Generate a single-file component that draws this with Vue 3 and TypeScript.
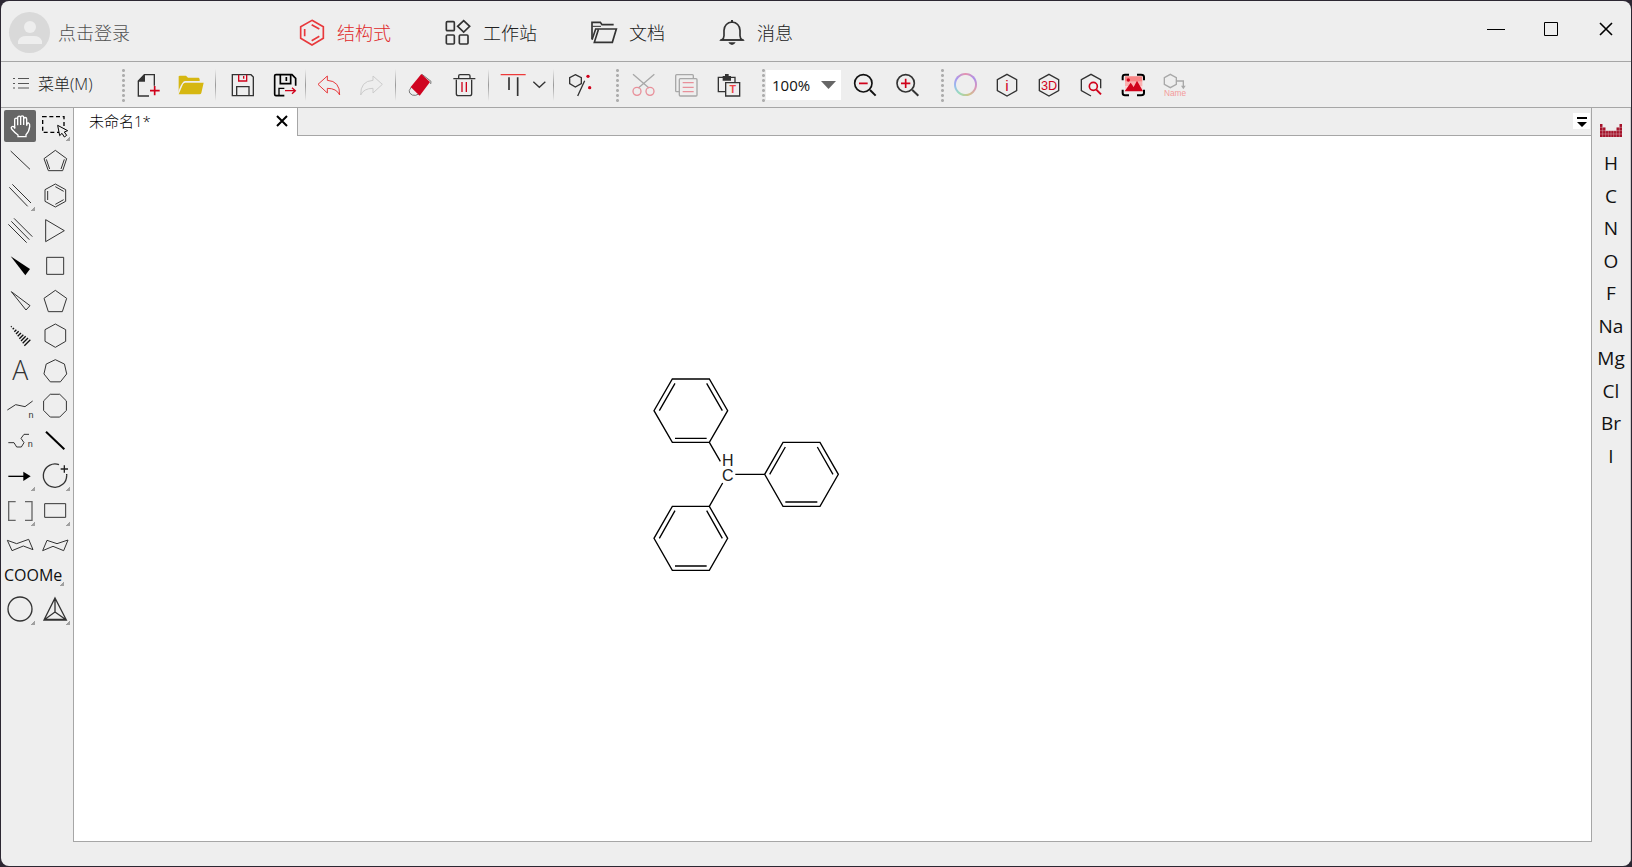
<script setup lang="ts">
import { h, ref } from 'vue'

interface Shape {
  d?: string
  text?: string
  x?: number
  y?: number
  size?: number
  weight?: number
  family?: string
  stroke?: string
  fill?: string
  w?: number
  dash?: string
}
interface Tool {
  label: string
  shapes: Shape[]
  more?: boolean
}

const INK = '#333333'
const RED = '#d0021b'
const PINK = '#e8909a'
const GREY = '#a8a8a8'

const line = (d: string, stroke = INK, w = 4): Shape => ({ d, stroke, w })
const solid = (d: string, fill = INK): Shape => ({ d, fill })
const ring = (cx: number, cy: number, r: number) =>
  `M${cx - r} ${cy}a${r} ${r} 0 1 0 ${2 * r} 0a${r} ${r} 0 1 0 ${-2 * r} 0z`
const polygon = (n: number, cx: number, cy: number, r: number, turn = 0) =>
  'M' +
  Array.from({ length: n }, (_, i) => {
    const a = ((i * 360) / n + turn - 90) * (Math.PI / 180)
    return `${(cx + r * Math.cos(a)).toFixed(1)} ${(cy + r * Math.sin(a)).toFixed(1)}`
  }).join('L') +
  'z'
const hashBars = Array.from({ length: 9 }, (_, i) => {
  const x = 22 + i * 6
  const y = 20 + i * 6
  const s = 1 + i
  return `M${x - s} ${y + s}L${x + s} ${y - s}`
}).join('')

const Glyph = (props: { shapes: Shape[]; box?: string }) =>
  h(
    'svg',
    { viewBox: props.box ?? '0 0 72 72', 'aria-hidden': 'true' },
    props.shapes.map((s) =>
      s.text
        ? h(
            'text',
            {
              x: s.x,
              y: s.y,
              fill: s.fill ?? INK,
              'font-size': s.size,
              'font-weight': s.weight ?? 400,
              'font-family': s.family ?? 'Liberation Sans, sans-serif',
              'text-anchor': 'middle',
            },
            s.text,
          )
        : h('path', {
            d: s.d,
            fill: s.fill ?? 'none',
            stroke: s.stroke ?? 'none',
            'stroke-width': s.w,
            'stroke-dasharray': s.dash,
          }),
    ),
  )
Glyph.props = ['shapes', 'box']

const sections = [
  {
    name: '结构式',
    shapes: [
      line('M39 4L73 23V58L39 78L5 58V23z', '#e8393c', 5),
      line('M17 30V52M38 17L61 30M38 65L61 52', '#e8393c', 5),
    ],
  },
  {
    name: '工作站',
    shapes: [
      line('M4 11Q4 8 7 8H25Q28 8 28 11V32Q28 35 25 35H7Q4 35 4 32z', INK, 5),
      line('M56 5L74 22L56 39L38 22z', INK, 5),
      line('M4 51Q4 48 7 48H25Q28 48 28 51V72Q28 75 25 75H7Q4 75 4 72z', INK, 5),
      line('M43 51Q43 48 46 48H66Q69 48 69 51V72Q69 75 66 75H46Q43 75 43 72z', INK, 5),
    ],
  },
  {
    name: '文档',
    shapes: [
      line('M3 60V10H28L33 17H68', INK, 5),
      line('M3 62L14 30H76L64 70H10L22 32', INK, 5),
      line('M4 22H30', INK, 3),
    ],
  },
  {
    name: '消息',
    shapes: [
      line('M8 63Q15 58 15 50V34Q17 11 39 9Q61 11 63 34V50Q63 58 70 63z', INK, 5),
      line('M4 63H74', INK, 5),
      line('M39 3V10', INK, 6),
      solid('M28 70H50Q46 78 39 78Q32 78 28 70z'),
    ],
  },
]

const hexagon = 'M36 4L65 20V53L36 69L7 53V20z'
const t = (label: string, ...shapes: Shape[]): Tool => ({ label, shapes })

const fileTools = [
  t('新建', line('M55 38V5H25L7 24V69H39'), solid('M5 26L27 3V26z'), line('M56 39V67M42 53H71', RED, 5)),
  t(
    '打开',
    solid('M-1 60V10Q-1 8 3 8H21L27 14H59Q62 15 62 20V24H18Q10 24 0 50z', '#d6b711'),
    solid('M-1 64L12 34Q14 29 19 29H74L67 60Q66 64 61 64z', '#d6b711'),
  ),
]
const saveTools = [
  t('保存', line('M7 5H63L70 12V68H7z'), line('M26 5V24H50V5M41 9V17', RED), line('M20 68V41H57V68')),
  t(
    '另存为',
    line('M34 68H9Q5 68 5 64V8Q5 5 9 5H57L68 16V38', '#000', 5),
    line('M22 5V32H53V5M40 12V24', '#000', 5),
    line('M18 68V46H34', '#000', 4),
    line('M36 53H66M57 44L67 53L57 62', RED, 4),
  ),
]
const historyTools = [
  t('撤销', line('M6 34L34 9V22Q72 24 71 66Q62 46 34 46V60z', '#e8393c', 3)),
  t('重做', line('M70 34L42 9V22Q4 24 5 66Q14 46 42 46V60z', '#cccccc', 3)),
]
const eraseTools = [
  t(
    '橡皮擦',
    line('M42 4L69 25L68 33M10 42Q0 54 5 60Q12 69 23 67L34 62', '#777777', 3),
    solid('M40 3L66 27L35 68L8 42z', '#cf0420'),
  ),
  t(
    '删除',
    line('M4 17H70M20 17V9Q20 5 24 5H50Q54 5 54 9V17M13 20V62Q13 68 19 68H53Q59 68 59 62V20'),
    line('M30 27V57M43 27V57', RED),
  ),
]
const chemTools = [
  t(
    '结构整理',
    line('M22 5L40 14V32L22 42L5 32V14zM50 23L29 69', INK, 4),
    solid(ring(60, 10, 5), RED),
    solid(ring(65, 44, 5), RED),
  ),
]
const clipTools = [
  t('剪切', line('M6 4L54 45M70 4L22 45', GREY, 4), line(ring(18, 55, 12) + ring(57, 55, 12), PINK)),
  t(
    '复制',
    line('M16 56H8Q5 56 5 53V8Q5 5 8 5H55Q58 5 58 8V16M19 17H66Q69 17 69 20V66Q69 69 66 69H19Q16 69 16 66V20Q16 17 19 17z', GREY),
    line('M26 29H59M26 43H59M26 56H59', PINK),
  ),
  t(
    '粘贴',
    line('M26 56H4V13H54V29M26 29H68V69H26z'),
    solid('M17 9H24V3H35V9H42V23H17z'),
    { text: 'T', x: 47, y: 61, size: 32, weight: 700, fill: '#ee4444' },
  ),
]
const zoomTools = [
  t('缩小', line(ring(31, 31, 26), '#111', 5), line('M51 51L68 68', '#111', 6), line('M18 31H44', RED, 5)),
  t('放大', line(ring(29, 31, 26), INK, 5), line('M49 51L67 68', INK, 6), line('M15 31H43M29 17V45', RED, 5)),
]
const infoTools = [
  t('信息', line(hexagon), { text: 'i', x: 36, y: 53, size: 46, fill: RED }),
  t('3D', line(hexagon), { text: '3D', x: 36, y: 50, size: 38, fill: RED }),
  t(
    '搜索',
    line('M36 69L7 53V20L36 4L65 20V46'),
    line(ring(43, 40, 12), RED, 5),
    line('M52 50L66 64', RED, 6),
  ),
  t(
    '图像识别',
    solid('M12 10H64V26H12z', '#f98585'),
    solid('M12 26H64V40H12z', '#fbb0b0'),
    solid('M12 40H64V54H12z', '#fbd0d0'),
    solid('M11 55L29 29L38 42L48 23L66 55z', RED),
    solid(ring(22, 21, 5), RED),
    line('M5 22V12Q5 5 12 5H24M48 5H60Q69 5 69 12V22M69 50V60Q69 67 60 67H48M24 67H12Q5 67 5 60V50', '#000', 6),
  ),
  t(
    '名称',
    line('M22 4L40 14V34L22 44L4 34V14zM42 24H61V40', GREY),
    solid('M54 38H68L61 49z', GREY),
    { text: 'Name', x: 36, y: 68, size: 25, fill: '#f49a9a' },
  ),
]

const thin = (d: string): Shape => line(d, INK, 3)
const tools: Tool[] = [
  t('移动', line(
    'M32 56V29a4 4 0 0 1 9 0V46M41 46V23a4 4 0 0 1 9 0V45M50 45V22a4 4 0 0 1 9 0V45M59 45V27a4 4 0 0 1 9 0V47Q69 38 74 39Q78 41 77 49C76 62 72 68 66 74V80H42V75Q34 70 23 57a4 4 0 0 1 7 -6L34 55',
    '#fff', 4)),
  { ...t('选择',
    { d: 'M11 20H75V67H11z', stroke: '#000', w: 4, dash: '12 8' },
    { d: 'M56 46L62 77L69 70L76 81L83 76L76 66L86 62z', stroke: '#000', w: 3, fill: '#eeeeee' }), more: true },
  t('单键', thin('M20 18L78 73')),
  t('环戊二烯', thin('M49 16L83 41L71 77H28L15 41zM22 43L32 72M76 43L66 72')),
  { ...t('双键', thin('M25 13L81 69M16 22L71 79')), more: true },
  t('苯环', thin('M49 12L80 29V64L49 81L18 64V29zM26 33V60M49 20L74 34M49 73L74 59')),
  t('三键', thin('M30 10L85 65M22 19L76 74M13 28L68 83')),
  t('环丙烷', thin('M20 14L76 47L20 80z')),
  t('实楔形键', solid('M20 19L78 57L64 76z', '#000')),
  t('环丁烷', thin('M23 22H74V73H23z')),
  t('空楔形键', thin('M22 20L78 62L66 75z')),
  t('环戊烷', thin('M49 16L83 40L70 80H28L15 40z')),
  t('虚楔形键', line(hashBars, '#111', 4)),
  t('环己烷', thin('M49 12L80 29V64L49 82L18 64V29z')),
  t('文字', { text: 'A', x: 49, y: 76, size: 80, weight: 300, family: 'Open Sans, sans-serif' }),
  t('环庚烷', thin(polygon(7, 49, 49, 35))),
  t('长链', thin('M10 60L35 44L63 50L86 33'), { text: 'n', x: 81, y: 83, size: 27 }),
  t('环辛烷', thin(polygon(8, 48, 47, 37, 22.5))),
  t('弯链', thin('M13 53H30L38 66H52L60 53L51 40L60 28H75'), { text: 'n', x: 79, y: 66, size: 27 }),
  t('粗线', line('M21 20L76 73', '#000', 6)),
  { ...t('箭头', line('M13 49H62', '#000', 4), solid('M58 35L80 49L58 63z', '#000')), more: true },
  { ...t('电荷', line('M60 14A35 35 0 1 0 83 47', INK, 4), line('M83 47V42M65 27H87M76 16V38', '#222', 4)), more: true },
  { ...t('括号', line('M35 20H14V76H35M63 20H84V76H63', '#666666', 4)), more: true },
  { ...t('矩形', line('M17 26H80V67H17z', INK, 3)), more: true },
  t('船式', thin('M10 31L38 41L74 28L87 59L58 48L24 62z')),
  t('椅式', thin('M24 31L54 41L87 30L74 62L42 49L11 62z')),
]
const lastTools: Tool[] = [
  { ...t('圆', line(ring(48, 45, 36), INK, 4)), more: true },
  { ...t('四面体', line('M48 12L82 78H15zM48 12V54L15 78M48 54L82 78M15 76H82', INK, 4)), more: true },
]

const elements = ['H', 'C', 'N', 'O', 'F', 'Na', 'Mg', 'Cl', 'Br', 'I']
const table = 'M0 0h8v39h-8zM8 10h9v29h-9zM17 20h32v19h-32zM49 10h9v29h-9zM58 0h8v39h-8z'
const tableGrid = 'M0 10H66M0 20H66M0 30H66M8 0V39M17 0V39M25 0V39M33 0V39M41 0V39M49 0V39M58 0V39'

const zoom = ref('100%')
const activeTool = ref('移动')
</script>

<template>
  <div class="window">
    <header class="titlebar">
      <button class="account">
        <svg class="avatar" viewBox="0 0 41 41" aria-hidden="true">
          <circle cx="20.5" cy="20.5" r="20.5" fill="#d9d9d9" />
          <circle cx="21" cy="15" r="6" fill="#eeeeee" />
          <path d="M9 32V29Q11 24 17 24H25Q31 24 33 29V32z" fill="#eeeeee" />
        </svg>
        点击登录
      </button>
      <nav class="sections">
        <a v-for="(s, i) in sections" :key="s.name" href="#" :class="{ active: i === 0 }">
          <Glyph class="section-icon" :shapes="s.shapes" box="0 0 78 81" />{{ s.name }}
        </a>
      </nav>
      <div class="window-buttons">
        <button aria-label="最小化"><svg viewBox="0 0 18 18"><path d="M0 9.500H18" /></svg></button>
        <button aria-label="最大化"><svg viewBox="0 0 18 18"><path d="M2.500 2.500H15.500V15.500H2.500z" /></svg></button>
        <button aria-label="关闭"><svg viewBox="0 0 18 18"><path d="M3 3L15 15M15 3L3 15" stroke-width="1.600" /></svg></button>
      </div>
    </header>

    <div class="toolbar">
      <button class="menu">
        <svg viewBox="0 0 16 12" aria-hidden="true">
          <path d="M0 1.500H2M0 6.500H2M0 11H2M5 1.500H16M5 6.500H16M5 11H16" />
        </svg>
        菜单(M)
      </button>
      <i class="grip"></i>
      <div class="group file">
        <button v-for="b in fileTools" :key="b.label" :aria-label="b.label"><Glyph :shapes="b.shapes" /></button>
      </div>
      <i class="rule"></i>
      <div class="group near">
        <button v-for="b in saveTools" :key="b.label" :aria-label="b.label"><Glyph :shapes="b.shapes" /></button>
      </div>
      <i class="rule"></i>
      <div class="group history">
        <button v-for="b in historyTools" :key="b.label" :aria-label="b.label"><Glyph :shapes="b.shapes" /></button>
      </div>
      <i class="rule"></i>
      <div class="group erase">
        <button v-for="b in eraseTools" :key="b.label" :aria-label="b.label"><Glyph :shapes="b.shapes" /></button>
      </div>
      <i class="rule"></i>
      <div class="group align">
        <button aria-label="对齐">
          <Glyph :shapes="[line('M-1 5H74', '#ee3a3a', 4), line('M24 13V51M50 13V69', INK, 5)]" />
        </button>
        <button class="slim" aria-label="对齐方式">
          <Glyph :shapes="[line('M1 26L19 43L37 26')]" box="0 0 36 72" />
        </button>
      </div>
      <i class="rule"></i>
      <div class="group wide">
        <button v-for="b in chemTools" :key="b.label" :aria-label="b.label"><Glyph :shapes="b.shapes" /></button>
      </div>
      <i class="grip"></i>
      <div class="group clip">
        <button v-for="b in clipTools" :key="b.label" :aria-label="b.label"><Glyph :shapes="b.shapes" /></button>
      </div>
      <i class="grip"></i>
      <label class="zoom">
        <select v-model="zoom" aria-label="缩放">
          <option>50%</option>
          <option>100%</option>
          <option>200%</option>
        </select>
        <svg viewBox="0 0 15 8" aria-hidden="true"><path d="M0 0H15L7.500 8z" /></svg>
      </label>
      <div class="group clip">
        <button v-for="b in zoomTools" :key="b.label" :aria-label="b.label"><Glyph :shapes="b.shapes" /></button>
      </div>
      <i class="grip"></i>
      <div class="group info">
        <button aria-label="颜色"><span class="colour-ring"></span></button>
        <button v-for="b in infoTools" :key="b.label" :aria-label="b.label"><Glyph :shapes="b.shapes" /></button>
      </div>
    </div>

    <div class="body">
      <aside class="tools">
        <button
          v-for="b in tools"
          :key="b.label"
          :aria-label="b.label"
          :class="{ selected: b.label === activeTool, more: b.more }"
        >
          <Glyph :shapes="b.shapes" box="0 0 96 96" />
        </button>
        <button class="group-label more">COOMe</button>
        <button v-for="b in lastTools" :key="b.label" :aria-label="b.label" class="more">
          <Glyph :shapes="b.shapes" box="0 0 96 96" />
        </button>
      </aside>

      <main class="workspace">
        <div class="tabs">
          <div class="tab">
            <span>未命名1*</span>
            <button aria-label="关闭标签">
              <svg viewBox="0 0 12 12"><path d="M1 1L11 11M11 1L1 11" /></svg>
            </button>
          </div>
          <button class="tab-list" aria-label="标签列表">
            <svg viewBox="0 0 17 16"><path d="M4 4H14V6H4zM4 9H14L9 14z" /></svg>
          </button>
        </div>
        <div class="canvas">
          <svg class="molecule" viewBox="0 0 630 690" role="img" aria-label="三苯甲烷">
            <g id="bonds">
              <path d="M97 57H208L263 152L208 247H97L42 152zM105 70L58 152M200 70L247 152M105 235H200" />
              <path d="M429 247H540L595 343L540 439H429L374 343zM436 261L389 343M532 261L579 343M436 426H532" />
              <path d="M97 439H208L263 535L208 631H97L42 535zM105 452L58 535M200 452L247 535M105 618H200" />
              <path d="M208 247L241 304M286 343H374M248 369L208 439" />
            </g>
            <text x="263" y="319">H</text>
            <text x="263" y="362">C</text>
          </svg>
        </div>
      </main>

      <aside class="elements">
        <button class="periodic" aria-label="元素周期表">
          <svg viewBox="0 0 66 39">
            <path :d="table" fill="#a5122a" />
            <path :d="tableGrid" stroke="#eeeeee" />
          </svg>
        </button>
        <div class="symbols">
          <button v-for="e in elements" :key="e">{{ e }}</button>
        </div>
      </aside>
    </div>
  </div>
</template>

<style>
body {
  background: #2c2732;
}
</style>

<style scoped>
.window {
  box-sizing: border-box;
  display: flex;
  flex-direction: column;
  height: calc(100vh - 2px);
  margin: 1px;
  overflow: hidden;
  border-radius: 8px;
  background: #eeeeee;
  color: #333333;
  font-family: 'Open Sans', 'Noto Sans CJK SC', sans-serif;
  font-size: 16px;
}
svg {
  display: block;
  overflow: visible;
}
button {
  display: flex;
  align-items: center;
  justify-content: center;
  padding: 0;
  border: 0;
  background: none;
  color: inherit;
  font: inherit;
}

.titlebar {
  display: flex;
  align-items: center;
  flex: none;
  box-sizing: border-box;
  height: 61px;
  padding-top: 2px;
  border-bottom: 1px solid #a6a6a6;
  color: #222222;
  font-family: 'Noto Sans CJK SC', sans-serif;
  font-size: 18px;
  font-weight: 300;
}
.account {
  gap: 8px;
  width: 290px;
  padding-left: 8px;
  justify-content: flex-start;
  color: #505050;
}
.avatar {
  width: 41px;
  height: 41px;
}
.sections {
  display: flex;
  gap: 54px;
  flex: 1;
  padding-left: 8px;
}
.sections a {
  display: flex;
  align-items: center;
  gap: 12px;
  color: inherit;
  text-decoration: none;
}
.sections a.active {
  color: #e02828;
}
.section-icon {
  width: 26px;
  height: 27px;
}
.window-buttons {
  display: flex;
  gap: 37px;
  padding: 0 16px 6px 0;
}
.window-buttons svg {
  width: 18px;
  height: 18px;
  fill: none;
  stroke: #000000;
}

.toolbar {
  display: flex;
  align-items: center;
  flex: none;
  height: 45px;
  border-bottom: 1px solid #a6a6a6;
}
.menu {
  gap: 9px;
  width: 121px;
  padding: 0 0 4px 12px;
  justify-content: flex-start;
  color: #222222;
  font-weight: 300;
}
.menu svg {
  width: 16px;
  height: 12px;
  stroke: #555555;
}
.grip {
  flex: none;
  width: 3px;
  height: 34px;
  background: radial-gradient(circle, #adadad 1px, transparent 2px) 0 0 / 3px 5px;
}
.rule {
  flex: none;
  width: 1px;
  height: 32px;
  background: linear-gradient(transparent, #999999, transparent);
}
.group {
  display: flex;
  gap: 19px;
  padding: 0 12px;
}
.group button,
.group svg {
  width: 24px;
  height: 24px;
}
.file {
  padding-left: 11px;
}
.near {
  padding: 0 8px 0 14px;
}
.history {
  padding-left: 10px;
}
.erase {
  gap: 20px;
}
.align {
  gap: 8px;
  padding-right: 8px;
}
.group .slim,
.slim svg {
  width: 12px;
}
.wide {
  padding: 0 24px 0 14px;
}
.clip {
  padding: 0 21px 0 12px;
}
.info {
  gap: 18px;
  padding-left: 9px;
}
.colour-ring {
  width: 23px;
  height: 23px;
  border-radius: 50%;
  background:
    radial-gradient(circle, #eeeeee 9px, transparent 10px),
    conic-gradient(#e694ae, #ad90ea 15%, #da96ba 30%, #d0c488 45%, #98dcba 60%, #98beee 72%, #ab96ec 85%, #e694ae);
}
.zoom {
  position: relative;
  display: block;
  width: 75px;
  margin-left: 1px;
}
.zoom select {
  appearance: none;
  width: 75px;
  height: 30px;
  padding: 0 0 0 6px;
  border: 0;
  border-radius: 0;
  background: #ffffff;
  color: #111111;
  font: inherit;
  font-size: 15px;
}
.zoom svg {
  position: absolute;
  top: 11px;
  right: 5px;
  width: 15px;
  height: 8px;
  fill: #666666;
  pointer-events: none;
}

.body {
  display: flex;
  flex: 1;
  min-height: 0;
}
.tools {
  display: grid;
  grid-template-columns: 32px 32px;
  gap: 3px;
  align-content: start;
  flex: none;
  padding: 2px 2px 0 3px;
}
.tools button {
  position: relative;
  width: 32px;
  height: 32px;
  border-radius: 2px;
}
.tools svg {
  width: 32px;
  height: 32px;
}
.tools .selected {
  background: #666666;
}
.tools .more::after {
  content: '';
  position: absolute;
  right: 1px;
  bottom: 1px;
  width: 4px;
  height: 4px;
  background: linear-gradient(135deg, transparent 50%, #a0a0a0 50%);
}
.tools .group-label {
  grid-column: span 2;
  align-items: flex-start;
  justify-content: flex-start;
  width: 61px;
  height: 26px;
  color: #111111;
  line-height: 20px;
}
.tools .group-label::after {
  bottom: 5px;
}
.workspace {
  display: flex;
  flex-direction: column;
  flex: 1;
  min-width: 0;
  margin-bottom: 24px;
  border: solid #a6a6a6;
  border-width: 0 1px 1px;
}
.tabs {
  display: flex;
  align-items: center;
  justify-content: space-between;
  flex: none;
  box-sizing: border-box;
  height: 28px;
  padding-right: 1px;
  box-shadow: inset 0 -1px #a6a6a6;
}
.tab {
  display: flex;
  align-items: flex-start;
  justify-content: space-between;
  box-sizing: border-box;
  width: 224px;
  height: 28px;
  padding: 3px 9px 0 15px;
  border-right: 1px solid #a6a6a6;
  background: #ffffff;
  color: #000000;
  font-size: 15px;
  font-weight: 300;
  line-height: 20px;
}
.tab button {
  margin-top: 4px;
}
.tab svg {
  width: 12px;
  height: 12px;
  stroke: #000000;
  stroke-width: 2;
}
.tab-list {
  margin-bottom: 2px;
  background: #ffffff;
}
.tab-list svg {
  width: 17px;
  height: 16px;
}
.canvas {
  position: relative;
  flex: 1;
  background: #ffffff;
}
.molecule {
  position: absolute;
  left: 566px;
  top: 224px;
  width: 210px;
  height: 230px;
  fill: none;
  stroke: #000000;
  stroke-width: 4;
}
.molecule text {
  fill: #222222;
  stroke: none;
  font: 48px 'Liberation Sans', sans-serif;
  text-anchor: middle;
}

.elements {
  display: flex;
  flex-direction: column;
  align-items: center;
  flex: none;
  width: 38px;
  border-right: 1px solid #cccccc;
}
.periodic {
  margin-top: 16px;
}
.periodic svg {
  width: 22px;
  height: 13px;
}
.symbols {
  display: grid;
  grid-auto-rows: 1fr;
  height: 325px;
  margin-top: 10px;
  color: #111111;
  font-size: 19px;
}
</style>
